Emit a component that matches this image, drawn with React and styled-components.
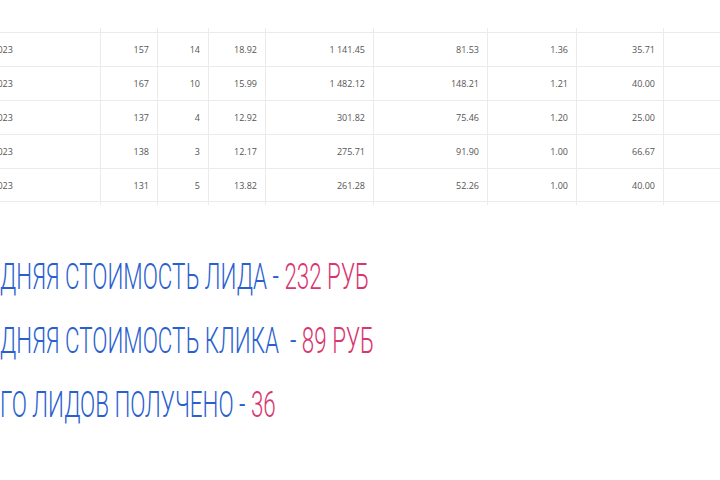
import React from "react";
import styled, { createGlobalStyle } from "styled-components";

const GlobalStyle = createGlobalStyle`
  html, body {
    margin: 0;
    padding: 0;
    background: #fff;
    overflow: hidden;
  }
`;

const Page = styled.div`
  width: 720px;
  height: 480px;
  overflow: hidden;
  padding-top: 28px;
  box-sizing: border-box;
`;

const COLS = "148px 57px 51px 57px 108px 114px 89px 87px 1fr";

const Table = styled.div`
  margin-left: -47px;
  width: calc(100% + 47px);
  font-family: "Open Sans", "Liberation Sans", sans-serif;
  font-size: 9px;
  color: #555;
`;

const Row = styled.div`
  display: grid;
  grid-template-columns: ${COLS};
  height: ${(p) => (p.edge ? p.edge : 34)}px;
  box-sizing: border-box;
  border-top: ${(p) => (p.edge ? "none" : "1px solid #ebebeb")};
  border-bottom: ${(p) => (p.last ? "1px solid #ebebeb" : "none")};
`;

const Cell = styled.div`
  display: flex;
  align-items: center;
  justify-content: ${(p) => (p.left ? "flex-start" : "flex-end")};
  padding: ${(p) => (p.left ? "0 8px 0 14px" : "0 8px")};
  border-right: ${(p) => (p.open ? "none" : "1px solid #ebebeb")};
  white-space: nowrap;
`;

const Summary = styled.div`
  margin-top: 52px;
  display: flex;
  flex-direction: column;
  gap: 23px;
`;

const Line = styled.div`
  margin-left: -41px;
  font-family: Roboto, "Liberation Sans", sans-serif;
  font-weight: 300;
  font-size: 36px;
  line-height: 41px;
  color: #2a5fcf;
  white-space: pre;
  transform: scaleX(0.622);
  transform-origin: left center;
`;

const Accent = styled.span`
  color: #d9356f;
`;

const rows = [
  ["01.03.2023", "157", "14", "18.92", "1 141.45", "81.53", "1.36", "35.71"],
  ["02.03.2023", "167", "10", "15.99", "1 482.12", "148.21", "1.21", "40.00"],
  ["03.03.2023", "137", "4", "12.92", "301.82", "75.46", "1.20", "25.00"],
  ["04.03.2023", "138", "3", "12.17", "275.71", "91.90", "1.00", "66.67"],
  ["05.03.2023", "131", "5", "13.82", "261.28", "52.26", "1.00", "40.00"],
];

function EdgeRow({ height }) {
  return (
    <Row edge={height}>
      {Array.from({ length: 9 }).map((_, i) => (
        <Cell key={i} open={i === 8} />
      ))}
    </Row>
  );
}

export default function App() {
  return (
    <Page>
      <GlobalStyle />
      <Table>
        <EdgeRow height={4} />
        {rows.map((r, i) => (
          <Row key={i} last={i === rows.length - 1}>
            {r.map((v, j) => (
              <Cell key={j} left={j === 0}>
                {v}
              </Cell>
            ))}
            <Cell open />
          </Row>
        ))}
        <EdgeRow height={3} />
      </Table>
      <Summary>
        <Line>
          СРЕДНЯЯ СТОИМОСТЬ ЛИДА - <Accent>232 РУБ</Accent>
        </Line>
        <Line>
          СРЕДНЯЯ СТОИМОСТЬ КЛИКА  - <Accent>89 РУБ</Accent>
        </Line>
        <Line>
          ВСЕГО ЛИДОВ ПОЛУЧЕНО - <Accent>36</Accent>
        </Line>
      </Summary>
    </Page>
  );
}
